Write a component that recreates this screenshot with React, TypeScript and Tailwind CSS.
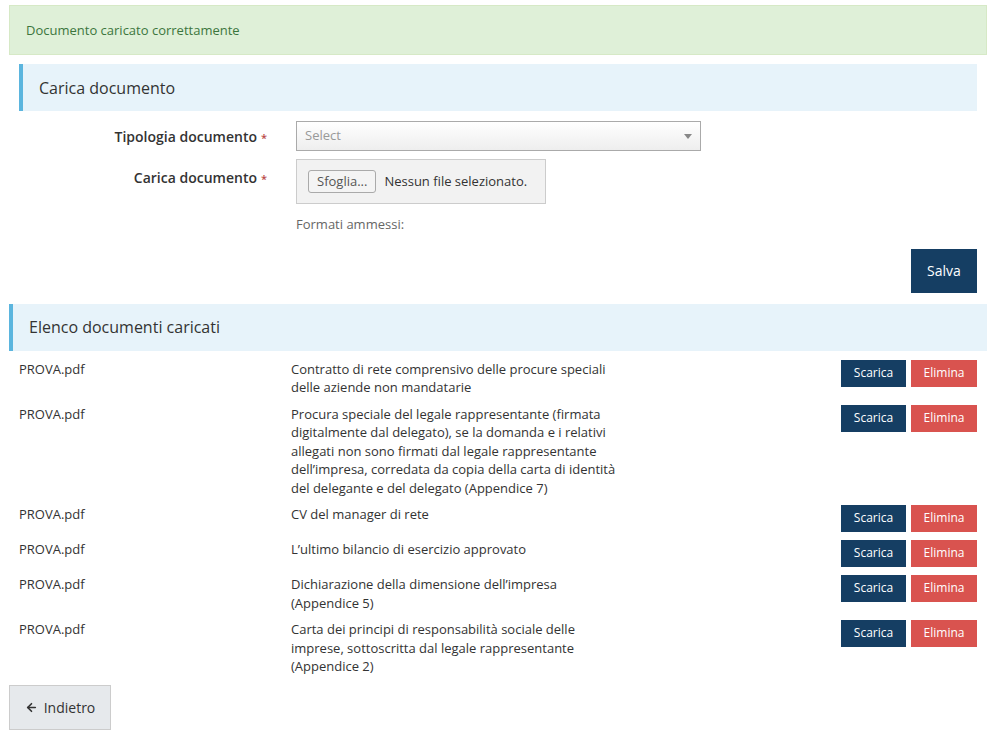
import { ArrowLeft } from "lucide-react";

const documenti = [
  "Contratto di rete comprensivo delle procure speciali delle aziende non mandatarie",
  "Procura speciale del legale rappresentante (firmata digitalmente dal delegato), se la domanda e i relativi allegati non sono firmati dal legale rappresentante dell’impresa, corredata da copia della carta di identità del delegante e del delegato (Appendice 7)",
  "CV del manager di rete",
  "L’ultimo bilancio di esercizio approvato",
  "Dichiarazione della dimensione dell’impresa (Appendice 5)",
  "Carta dei principi di responsabilità sociale delle imprese, sottoscritta dal legale rappresentante (Appendice 2)",
];

export default function App() {
  return (
    <div
      className="min-h-screen bg-white pl-[9px] pr-[6px] pt-[5px] text-[#333]"
      style={{ fontFamily: '"Open Sans", "Liberation Sans", sans-serif' }}
    >
      <div className="h-[50px] flex items-center border border-[#d6e9c6] bg-[#dff0d8] pl-[16px] pt-[2px] text-[13px] text-[#3c763d]">
        Documento caricato correttamente
      </div>

      <div className="mx-[10px] mt-[9px] h-[47px] flex items-center border-l-4 border-[#5bb5de] bg-[#e7f3fa] pl-[16px] text-[16px]">
        Carica documento
      </div>

      <div className="mt-[10px] flex items-center">
        <div className="w-[287px] pr-[29px] text-right text-[14px] font-semibold">
          Tipologia documento<span className="ml-[4px] text-[11px] text-[#b94a48]">*</span>
        </div>
        <div className="w-[405px] h-[30px] flex items-center justify-between border border-[#aaa] bg-gradient-to-b from-white to-[#eee] px-[8px] text-[13px] text-[#999]">
          <span>Select</span>
          <span className="w-0 h-0 border-l-[4px] border-r-[4px] border-t-[5px] border-l-transparent border-r-transparent border-t-[#888]" />
        </div>
      </div>

      <div className="mt-[8px] flex items-start">
        <div className="w-[287px] pr-[29px] pt-[8px] text-right text-[14px] font-semibold">
          Carica documento<span className="ml-[4px] text-[11px] text-[#b94a48]">*</span>
        </div>
        <div>
          <div className="w-[250px] h-[45px] flex items-center gap-[8px] border border-[#ccc] bg-[#f2f2f2] px-[11px] text-[13px]">
            <span className="h-[23px] px-[8px] flex items-center border border-[#aaa] rounded-[3px] bg-[#f4f4f4] text-[#555]">
              Sfoglia...
            </span>
            <span>Nessun file selezionato.</span>
          </div>
          <div className="mt-[11px] text-[13px] text-[#666]">Formati ammessi:</div>
        </div>
      </div>

      <div className="mt-[14px] flex justify-end pr-[10px]">
        <button className="w-[66px] h-[44px] bg-[#153e63] text-[14px] text-white">Salva</button>
      </div>

      <div className="mt-[11px] h-[47px] flex items-center border-l-4 border-[#5bb5de] bg-[#e7f3fa] pl-[16px] text-[16px]">
        Elenco documenti caricati
      </div>

      <div className="mt-[9px]">
        {documenti.map((d, i) => (
          <div key={i} className="flex items-start pb-[8px] pl-[10px] pr-[10px] text-[13px] leading-[18.5px]">
            <div className="w-[272px]">PROVA.pdf</div>
            <div className="w-[335px]">{d}</div>
            <div className="ml-auto flex gap-[5px]">
              <button className="w-[65px] h-[27px] bg-[#153e63] text-[12px] text-white">Scarica</button>
              <button className="w-[66px] h-[27px] bg-[#d9534f] text-[12px] text-white">Elimina</button>
            </div>
          </div>
        ))}
      </div>

      <button className="mt-[1px] w-[102px] h-[45px] flex items-center justify-center gap-[6px] border border-[#ccc] bg-[#e6e9ec] text-[14px] text-[#333]">
        <ArrowLeft size={13} strokeWidth={3} />
        Indietro
      </button>
    </div>
  );
}
